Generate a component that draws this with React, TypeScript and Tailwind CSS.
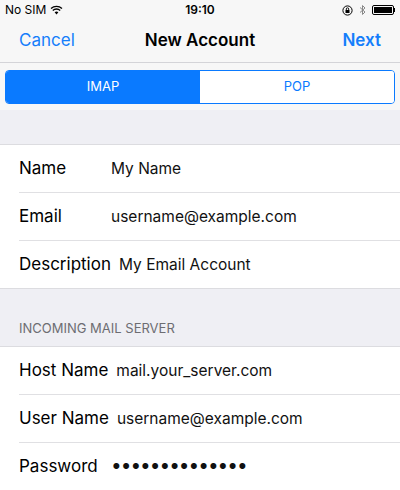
import React from "react";

const Row = ({ label, value, last }: { label: string; value: React.ReactNode; last?: boolean }) => (
  <div className="pl-[19px] bg-white">
    <div className={`flex items-center gap-2 pr-4 ${last ? "h-[47px]" : "h-[48px] border-b border-[#e0e0e3]"}`}>
      <span className="min-w-[84px] text-[17px] text-black">{label}</span>
      <span className="text-[15.5px] text-[#111]">{value}</span>
    </div>
  </div>
);

export default function App() {
  return (
    <div className="w-[400px] h-[490px] bg-[#efeff4] overflow-hidden" style={{ fontFamily: "Inter, 'Liberation Sans', sans-serif" }}>
      <div className="bg-[#f7f7f7] border-b border-[#d4d4d8]">
        <div className="h-[20px] flex items-center justify-between px-[5px] text-[12px] text-black relative">
          <div className="flex items-center gap-1">
            <span>No SIM</span>
            <svg width="13" height="10" viewBox="0 0 13 10"><path d="M6.5 9.5 L4.6 7.3 A3 3 0 0 1 8.4 7.3Z" fill="#000"/><path d="M2.8 5.5 A5.3 5.3 0 0 1 10.2 5.5" stroke="#000" strokeWidth="1.3" fill="none"/><path d="M1 3.5 A8 8 0 0 1 12 3.5" stroke="#000" strokeWidth="1.3" fill="none"/></svg>
          </div>
          <span className="absolute left-1/2 -translate-x-1/2 font-semibold">19:10</span>
          <div className="flex items-center gap-[6px]">
            <svg width="11" height="11" viewBox="0 0 11 11"><circle cx="5.5" cy="5.5" r="4.6" stroke="#000" strokeWidth="1" fill="none"/><rect x="3.5" y="5" width="4" height="3" fill="#000"/><path d="M4.3 5V4a1.2 1.2 0 0 1 2.4 0v1" stroke="#000" fill="none" strokeWidth="0.9"/></svg>
            <svg width="7" height="12" viewBox="0 0 7 12"><path d="M1 3.5 L6 8 L3.5 10.5 V1.5 L6 4 L1 8.5" stroke="#888" strokeWidth="1" fill="none"/></svg>
            <div className="flex items-center">
              <div className="w-[22px] h-[10px] border border-black rounded-[2px] p-[1px]"><div className="w-full h-full bg-black" /></div>
              <div className="w-[1.5px] h-[4px] bg-black" />
            </div>
          </div>
        </div>
        <div className="h-[42px] flex items-center justify-between px-[19px] relative">
          <span className="text-[#157efb] text-[17px]">Cancel</span>
          <span className="absolute left-1/2 -translate-x-1/2 text-[17px] font-semibold text-black">New Account</span>
          <span className="text-[#157efb] text-[17px] font-semibold">Next</span>
        </div>
      </div>
      <div className="bg-[#f7f7f7] h-[47px] px-[5px] pt-[7px]">
        <div className="h-[34px] flex border border-[#0a7aff] rounded-[4px] overflow-hidden text-[13px]">
          <div className="flex-1 bg-[#0a7aff] text-white flex items-center justify-center">IMAP</div>
          <div className="flex-1 bg-white text-[#0a7aff] flex items-center justify-center">POP</div>
        </div>
      </div>
      <div className="h-[35px] border-b border-[#dcdce0]" />
      <Row label="Name" value="My Name" />
      <Row label="Email" value="username@example.com" />
      <Row label="Description" value="My Email Account" last />
      <div className="h-[59px] border-t border-b border-[#dcdce0] flex items-end pb-[8px] px-[19px] text-[13px] text-[#6d6d72]">INCOMING MAIL SERVER</div>
      <Row label="Host Name" value="mail.your_server.com" />
      <Row label="User Name" value="username@example.com" />
      <Row label="Password" value={<span className="text-[19px] tracking-[-1px]">••••••••••••••</span>} last />
      <div className="border-t border-[#dcdce0]" />
    </div>
  );
}
